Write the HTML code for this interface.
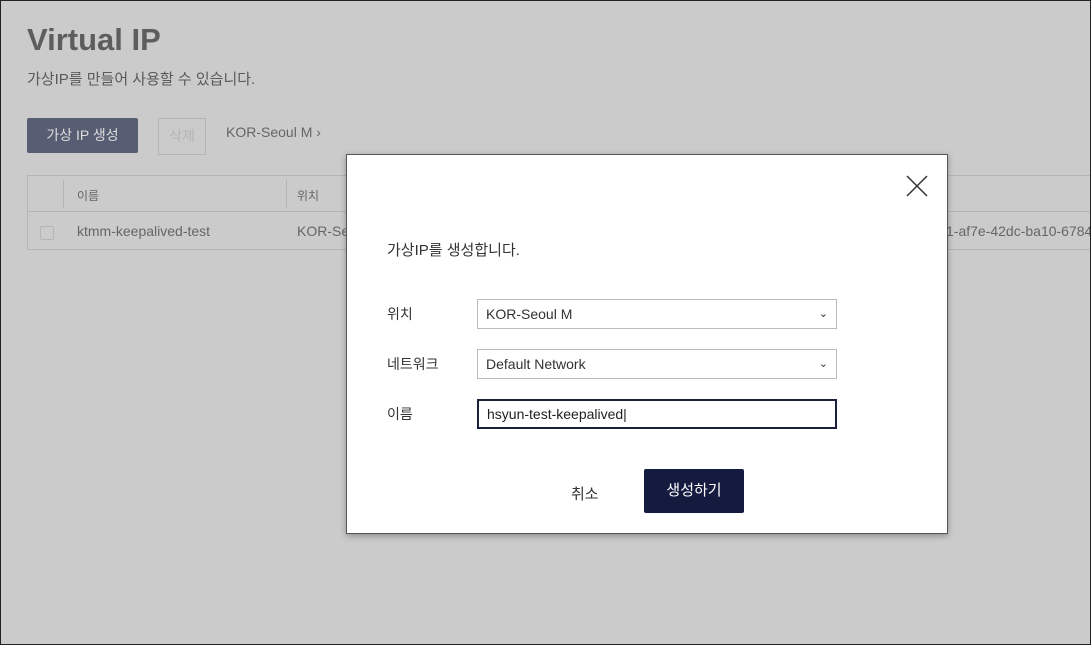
<!DOCTYPE html>
<html><head><meta charset="utf-8"><style>
*{box-sizing:border-box;margin:0;padding:0}
body{width:1091px;height:645px;overflow:hidden;background:#cbcbcb;font-family:"Liberation Sans","Noto Sans CJK KR",sans-serif;position:relative}
.a{position:absolute;white-space:nowrap}
</style></head><body>
<div class="a" style="left:27px;top:22px;font-size:31px;font-weight:bold;color:#5d5d5d">Virtual IP</div>
<div class="a" style="left:27px;top:68px;font-size:15px;color:#5a5a5a">가상IP를 만들어 사용할 수 있습니다.</div>
<div class="a" style="left:27px;top:118px;width:111px;height:35px;background:#575d73;border-radius:2px;color:#ddd;font-size:14px;text-align:center;line-height:35px">가상 IP 생성</div>
<div class="a" style="left:158px;top:118px;width:48px;height:37px;border:1px solid #b5b5b5;color:#b5b5b5;font-size:14px;text-align:center;line-height:35px">삭제</div>
<div class="a" style="left:226px;top:124px;font-size:14px;color:#666">KOR-Seoul M ›</div>
<div class="a" style="left:27px;top:175px;width:1070px;height:75px;border:1px solid #b5b5b5;border-right:none"></div>
<div class="a" style="left:27px;top:211px;width:1070px;height:1px;background:#b5b5b5"></div>
<div class="a" style="left:63px;top:180px;width:1px;height:28px;background:#b5b5b5"></div>
<div class="a" style="left:286px;top:180px;width:1px;height:28px;background:#b5b5b5"></div>
<div class="a" style="left:77px;top:187px;font-size:12px;color:#666">이름</div>
<div class="a" style="left:297px;top:187px;font-size:12px;color:#666">위치</div>
<div class="a" style="left:40px;top:226px;width:14px;height:14px;border:1px solid #b5b5b5;border-radius:2px"></div>
<div class="a" style="left:77px;top:223px;font-size:14px;color:#666">ktmm-keepalived-test</div>
<div class="a" style="left:297px;top:223px;font-size:14px;color:#666">KOR-Se</div>
<div class="a" style="left:946px;top:223px;font-size:14px;color:#666">1-af7e-42dc-ba10-6784</div>
<div class="a" style="left:346px;top:154px;width:602px;height:380px;background:#fff;border:1px solid #555;box-shadow:0 2px 6px rgba(0,0,0,.3)">
<svg class="a" style="left:558px;top:19px" width="24" height="24"><path d="M2 2L22 22M22 2L2 22" stroke="#333" stroke-width="1.5"/></svg>
<div class="a" style="left:40px;top:84px;font-size:15px;color:#333">가상IP를 생성합니다.</div>
<div class="a" style="left:40px;top:149px;font-size:14px;color:#333">위치</div>
<div class="a" style="left:40px;top:199px;font-size:14px;color:#333">네트워크</div>
<div class="a" style="left:40px;top:249px;font-size:14px;color:#333">이름</div>
<div class="a" style="left:130px;top:144px;width:360px;height:30px;border:1px solid #bbb;font-size:14px;color:#333;line-height:28px;padding-left:8px">KOR-Seoul M<span class="a" style="right:8px;top:0;font-size:11px">⌄</span></div>
<div class="a" style="left:130px;top:194px;width:360px;height:30px;border:1px solid #bbb;font-size:14px;color:#333;line-height:28px;padding-left:8px">Default Network<span class="a" style="right:8px;top:0;font-size:11px">⌄</span></div>
<div class="a" style="left:130px;top:244px;width:360px;height:30px;border:2px solid #1a1f3a;font-size:14px;color:#222;line-height:26px;padding-left:8px">hsyun-test-keepalived|</div>
<div class="a" style="left:224px;top:328px;font-size:15px;color:#333">취소</div>
<div class="a" style="left:297px;top:314px;width:100px;height:44px;background:#141b3f;border-radius:2px;color:#fff;font-size:15px;text-align:center;line-height:44px">생성하기</div>
</div>
<div class="a" style="left:0;top:0;width:1091px;height:645px;border:1px solid #222"></div>
</body></html>
